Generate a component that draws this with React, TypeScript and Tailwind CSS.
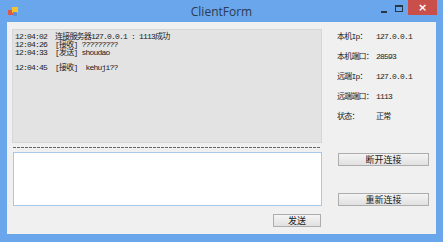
import React from "react"

const mono = { fontFamily: '"Liberation Mono", "Noto Sans CJK SC", monospace' }

const logLines = [
    "12:04:02  连接服务器127.0.0.1 : 1113成功",
    "12:04:26  [接收] ?????????",
    "12:04:33  [发送] shoudao",
    "",
    "12:04:45  [接收]  kehuji??",
]

const infoRows = [
    { label: "本机Ip：", value: "127.0.0.1" },
    { label: "本机端口：", value: "28593" },
    { label: "远端Ip：", value: "127.0.0.1" },
    { label: "远端端口：", value: "1113" },
    { label: "状态：", value: "正常" },
]

const WinButton = ({ children, className }: { children: React.ReactNode; className?: string }) => {
    return <button
        className={"h-[13px] border border-[#adadad] bg-gradient-to-b from-[#f4f4f4] to-[#e1e1e1] text-[9px] leading-[11px] text-[#1a1a1a] flex items-center justify-center " + (className ?? "")}
        style={{ fontFamily: '"Noto Sans CJK SC", sans-serif' }}
    >
        {children}
    </button>
}

export default function App() {
    return <div className="w-[443px] h-[242px] bg-[#6aa6eb] flex flex-col overflow-hidden">

        {/* title bar */}
        <div className="relative h-[22px] flex items-center">
            <svg className="absolute left-[8px] top-[7px]" width="10" height="10" viewBox="0 0 10 10">
                <rect x="0" y="3" width="5" height="5" fill="#d8584a" />
                <rect x="4" y="0" width="6" height="6" fill="#f2c230" />
                <rect x="5" y="5" width="4" height="4" fill="#5b8fd6" />
            </svg>
            <div className="w-full text-center text-[12px] leading-[14px] text-[#2a3a52] pt-[1px]" style={{ fontFamily: '"Open Sans", sans-serif' }}>ClientForm</div>
            <div className="absolute left-[381px] top-[11px] w-[6px] h-[2px] bg-[#2a3546]" />
            <div className="absolute left-[395px] top-[5px] w-[8px] h-[7px] border border-[#2a3546] border-t-2" />
            <div className="absolute left-[408px] top-0 w-[29px] h-[15px] bg-[#c9504a] flex items-center justify-center text-white text-[11px] leading-none font-bold" style={{ fontFamily: '"DejaVu Sans", sans-serif' }}>×</div>
        </div>

        {/* client area */}
        <div className="mx-[7px] h-[212px] bg-[#f0f0f0] flex">

            {/* left column */}
            <div className="ml-[5px] pt-[7px] w-[310px] flex flex-col">
                <div className="h-[114px] bg-[#e3e3e3] border border-[#d6d6d6] pt-[3px] pl-[2px] text-[8px] leading-[7.75px] tracking-[-0.8px] text-[#222]" style={mono}>
                    {logLines.map((l, i) => <div key={i} className="whitespace-pre h-[7.75px]">{l}</div>)}
                </div>

                <div className="mt-[4px] ml-[1px] w-[307px] h-[1px] bg-[repeating-linear-gradient(90deg,#666_0_3px,transparent_3px_4px)]" />

                <div className="mt-[4px] ml-[1px] h-[54px] bg-white border border-[#a8c8ea]" />

                <div className="mt-[8px] flex justify-end">
                    <WinButton className="w-[48px] mr-[1px]">发送</WinButton>
                </div>
            </div>

            {/* right column */}
            <div className="ml-[15px] pt-[5px] flex-1 flex flex-col">
                {infoRows.map((r) => <div key={r.label} className="h-[20px] flex items-center text-[8px] leading-[8px] tracking-[-0.8px] text-[#222]" style={mono}>
                    <span className="w-[39px] whitespace-nowrap">{r.label}</span>
                    <span>{r.value}</span>
                </div>)}

                <WinButton className="mt-[26px] ml-[1px] w-[91px]">断开连接</WinButton>
                <WinButton className="mt-[27px] ml-[1px] w-[91px]">重新连接</WinButton>
            </div>
        </div>
    </div>
}
